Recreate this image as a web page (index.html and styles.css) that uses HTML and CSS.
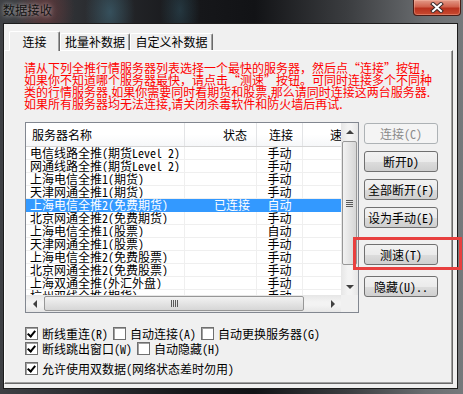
FILE: index.html
```html
<!DOCTYPE html>
<html lang="zh-CN">
<head>
  <meta charset="UTF-8">
  <meta name="viewport" content="width=device-width, initial-scale=1.0">
  <title>数据接收</title>
  <link rel="stylesheet" href="styles.css">
</head>
<body>
  <div class="window">
    <div class="titlebar">
      <span class="title">数据接收</span>
      <div class="close">
        <svg width="14" height="11" viewBox="0 0 14 11">
          <path d="M3 2 L11 9 M11 2 L3 9" stroke="#3a2a2a" stroke-width="4" stroke-linecap="square"/>
          <path d="M3 2 L11 9 M11 2 L3 9" stroke="#fff" stroke-width="2" stroke-linecap="square"/>
        </svg>
      </div>
    </div>

    <div class="client">
      <div class="tabs">
        <div class="tab active">连接</div>
        <div class="tab">批量补数据</div>
        <div class="tab">自定义补数据</div>
      </div>

      <div class="panel">
        <p class="notice">
          <span>请从下列全推行情服务器列表选择一个最快的服务器，然后点“连接”按钮，</span>
          <span>如果你不知道哪个服务器最快，请点击“测速”按钮。可同时连接多个不同种</span>
          <span>类的行情服务器,如果你需要同时看期货和股票,那么请同时连接这两台服务器.</span>
          <span>如果所有服务器均无法连接,请关闭杀毒软件和防火墙后再试.</span>
        </p>

        <div class="middle">
          <div class="listbox">
            <div class="list-content">
              <div class="row header">
                <div class="cell name">服务器名称</div>
                <div class="cell status">状态</div>
                <div class="cell mode">连接</div>
                <div class="cell speed">速度</div>
              </div>
              <div class="row"><div class="cell name">电信线路全推(期货Level 2)</div><div class="cell status"></div><div class="cell mode">手动</div><div class="cell speed"></div></div>
              <div class="row"><div class="cell name">网通线路全推(期货Level 2)</div><div class="cell status"></div><div class="cell mode">手动</div><div class="cell speed"></div></div>
              <div class="row"><div class="cell name">上海电信全推1(期货)</div><div class="cell status"></div><div class="cell mode">手动</div><div class="cell speed"></div></div>
              <div class="row"><div class="cell name">天津网通全推1(期货)</div><div class="cell status"></div><div class="cell mode">手动</div><div class="cell speed"></div></div>
              <div class="row selected"><div class="cell name">上海电信全推2(免费期货)</div><div class="cell status">已连接</div><div class="cell mode">自动</div><div class="cell speed"></div></div>
              <div class="row"><div class="cell name">北京网通全推2(免费期货)</div><div class="cell status"></div><div class="cell mode">手动</div><div class="cell speed"></div></div>
              <div class="row"><div class="cell name">上海电信全推1(股票)</div><div class="cell status"></div><div class="cell mode">自动</div><div class="cell speed"></div></div>
              <div class="row"><div class="cell name">天津网通全推1(股票)</div><div class="cell status"></div><div class="cell mode">手动</div><div class="cell speed"></div></div>
              <div class="row"><div class="cell name">上海电信全推2(免费股票)</div><div class="cell status"></div><div class="cell mode">手动</div><div class="cell speed"></div></div>
              <div class="row"><div class="cell name">北京网通全推2(免费股票)</div><div class="cell status"></div><div class="cell mode">手动</div><div class="cell speed"></div></div>
              <div class="row"><div class="cell name">上海双通全推(外汇外盘)</div><div class="cell status"></div><div class="cell mode">手动</div><div class="cell speed"></div></div>
              <div class="row"><div class="cell name">杭州双线全推(期货)</div><div class="cell status"></div><div class="cell mode">手动</div><div class="cell speed"></div></div>
            </div>

            <div class="vscroll">
              <div class="arrow"><span class="tri up"></span></div>
              <div class="track">
                <div class="thumb"><span class="grip"></span></div>
              </div>
              <div class="arrow"><span class="tri down"></span></div>
            </div>

            <div class="hscroll">
              <div class="arrow"><span class="tri left"></span></div>
              <div class="track">
                <div class="thumb"><span class="grip"></span></div>
              </div>
              <div class="arrow"><span class="tri right"></span></div>
            </div>
            <div class="corner"></div>
          </div>

          <div class="buttons">
            <div class="btn disabled">连接(C)</div>
            <div class="btn">断开D)</div>
            <div class="btn">全部断开(F)</div>
            <div class="btn">设为手动(E)</div>
            <div class="btn btn-speed">测速(T)</div>
            <div class="btn btn-hide">隐藏(U)..</div>
          </div>
        </div>

        <div class="options">
          <div class="opt-row first">
            <label class="opt"><span class="box checked"></span>断线重连(R)</label>
            <label class="opt"><span class="box"></span>自动连接(A)</label>
            <label class="opt"><span class="box"></span>自动更换服务器(G)</label>
          </div>
          <div class="opt-row second">
            <label class="opt"><span class="box checked"></span>断线跳出窗口(W)</label>
            <label class="opt"><span class="box"></span>自动隐藏(H)</label>
          </div>
          <div class="opt-row third">
            <label class="opt"><span class="box checked"></span>允许使用双数据(网络状态差时勿用)</label>
          </div>
        </div>
      </div>
    </div>

    <div class="highlight"></div>
  </div>
</body>
</html>
```

FILE: styles.css
```css
body {
  margin: 0;
  padding: 0;
  font-family: "Noto Sans CJK SC", "Liberation Sans", sans-serif;
  font-size: 12px;
  font-feature-settings: "hwid" 1;
  color: #000;
  background: #fff;
}

.window {
  position: relative;
  width: 463px;
  height: 394px;
  display: flex;
  flex-direction: column;
  background:
    radial-gradient(ellipse 30px 40px at 45px 10px, rgba(150, 60, 60, 0.45), transparent),
    radial-gradient(ellipse 25px 40px at 110px 12px, rgba(70, 120, 140, 0.5), transparent),
    radial-gradient(ellipse 20px 40px at 180px 10px, rgba(60, 110, 130, 0.35), transparent),
    linear-gradient(90deg, #3e4044 0%, #2a2c30 20%, #17181b 40%, #121316 55%, #3b3d40 75%, #6a6d70 92%, #76797c 100%);
}

/* title bar */
.titlebar {
  height: 23px;
  display: flex;
  justify-content: space-between;
  align-items: flex-start;
}

.title {
  padding: 3px 0 0 3px;
  line-height: 13px;
  letter-spacing: 0.3px;
  color: #111;
  text-shadow: 0 0 4px rgba(255, 255, 255, 0.55), 0 0 8px rgba(255, 255, 255, 0.35);
}

.close {
  width: 46px;
  height: 15px;
  margin-right: 2px;
  display: flex;
  justify-content: center;
  align-items: center;
  border: 1px solid #4a1c16;
  border-top: none;
  border-radius: 0 0 4px 4px;
  background: linear-gradient(#e39a88 0%, #d0614c 45%, #b8321e 55%, #c94a30 100%);
  box-shadow: inset 0 0 0 1px rgba(255, 200, 180, 0.35);
}

/* client area */
.client {
  flex: 1;
  margin: 0 5px 5px 3px;
  border: 1px solid #1c1c1c;
  background: #f0f0f0;
  display: flex;
  flex-direction: column;
}

.tabs {
  display: flex;
  align-items: flex-end;
  height: 19px;
  padding: 7px 0 0 5px;
  position: relative;
  z-index: 1;
}

.tab {
  height: 17px;
  line-height: 16px;
  box-sizing: border-box;
  white-space: nowrap;
  border-top: 1px solid #fff;
  border-left: 1px solid #fff;
  border-right: 1px solid #696969;
  box-shadow: inset -1px 0 0 #a0a0a0;
  border-radius: 2px 2px 0 0;
  background: #f0f0f0;
  text-align: center;
}

.tab.active {
  width: 51px;
  height: 20px;
  margin-bottom: -1px;
  line-height: 18px;
  padding-top: 1px;
}

.tab:nth-child(2) { width: 70px; }
.tab:nth-child(3) { width: 83px; }

.panel {
  flex: 1;
  margin: 0 4px 4px 0;
  border-top: 1px solid #fff;
  border-left: 1px solid #fff;
  border-right: 1px solid #696969;
  border-bottom: 1px solid #696969;
  box-shadow: inset -1px -1px 0 #a0a0a0;
  padding: 11px 0 0 19px;
}

.notice {
  margin: 0;
  color: #f00;
  line-height: 12px;
  font-feature-settings: normal;
}

.notice span {
  display: block;
  white-space: nowrap;
}

.middle {
  display: flex;
  margin-top: 12px;
  margin-left: 1px;
}

/* server list */
.listbox {
  width: 334px;
  height: 191px;
  box-sizing: border-box;
  border: 1px solid #828790;
  background: #fff;
  display: grid;
  grid-template-columns: 1fr 17px;
  grid-template-rows: 1fr 17px;
}

.list-content {
  overflow: hidden;
}

.row {
  display: flex;
  height: 13px;
  line-height: 12px;
  box-sizing: border-box;
  border-bottom: 1px solid #efefef;
  white-space: nowrap;
}

.row .cell {
  box-sizing: border-box;
  border-right: 1px solid #efefef;
  overflow: hidden;
}

.cell.name { width: 159px; padding-left: 4px; }
.cell.status { width: 72px; text-align: right; padding-right: 6px; }
.cell.mode { width: 46px; text-align: center; }
.cell.speed { flex: 1; border-right: none; }

.row.header {
  height: 24px;
  line-height: 23px;
  border-bottom: 1px solid #d5d5d5;
  background: linear-gradient(#fff 0%, #fff 50%, #f6f7f9 100%);
}

.row.header .cell { border-right: 1px solid #e3e4e6; }
.row.header .name { padding-left: 6px; }
.row.header .status { padding-right: 9px; }
.row.header .mode { padding-left: 3px; }
.row.header .speed { padding-left: 27px; border-right: none; }

.row.selected {
  background: #3399ff;
  color: #fff;
  border-bottom-color: #3399ff;
}

.row.selected .cell { border-right-color: #3399ff; }

/* scrollbars */
.vscroll, .hscroll {
  display: flex;
  background: linear-gradient(90deg, #e6e6e6, #f3f3f3 40%, #f3f3f3 60%, #e6e6e6);
}

.vscroll { flex-direction: column; }

.hscroll {
  background: linear-gradient(#e6e6e6, #f3f3f3 40%, #f3f3f3 60%, #e6e6e6);
}

.arrow {
  width: 17px;
  height: 17px;
  display: flex;
  justify-content: center;
  align-items: center;
  flex-shrink: 0;
}

.tri {
  width: 0;
  height: 0;
  border: 4px solid transparent;
}

.tri.up { border-bottom: 4px solid #404040; border-top: none; }
.tri.down { border-top: 4px solid #404040; border-bottom: none; }
.tri.left { border-right: 4px solid #404040; border-left: none; }
.tri.right { border-left: 4px solid #404040; border-right: none; }

.track {
  flex: 1;
  display: flex;
}

.vscroll .track { flex-direction: column; padding-top: 1px; }
.hscroll .track { padding-left: 1px; }

.thumb {
  box-sizing: border-box;
  border: 1px solid #979797;
  border-radius: 2px;
  display: flex;
  justify-content: center;
  align-items: center;
}

.vscroll .thumb {
  height: 124px;
  margin: 0 1px;
  background: linear-gradient(90deg, #f2f2f2, #e4e4e4 50%, #d6d6d6);
}

.hscroll .thumb {
  width: 260px;
  margin: 1px 0;
  background: linear-gradient(#f2f2f2, #e4e4e4 50%, #d6d6d6);
}

.grip {
  display: block;
}

.vscroll .grip {
  width: 7px;
  height: 7px;
  background: repeating-linear-gradient(#5a5a5a 0 1px, transparent 1px 2px);
}

.hscroll .grip {
  width: 7px;
  height: 7px;
  background: repeating-linear-gradient(90deg, #5a5a5a 0 1px, transparent 1px 2px);
}

.corner {
  background: #f0f0f0;
}

/* buttons */
.buttons {
  display: flex;
  flex-direction: column;
  gap: 7px;
  margin-left: 5px;
  padding-top: 1px;
}

.btn {
  width: 74px;
  height: 21px;
  box-sizing: border-box;
  border: 1px solid #707070;
  border-radius: 3px;
  background: linear-gradient(#f2f2f2 0%, #ebebeb 50%, #dddddd 51%, #cfcfcf 100%);
  line-height: 19px;
  text-align: center;
  white-space: nowrap;
}

.btn.disabled {
  color: #8a8a8a;
  border-color: #adb2b5;
  background: #f4f4f4;
}

.btn-speed { margin-top: 9px; }
.btn-hide { margin-top: 4px; }

/* options */
.options {
  display: flex;
  flex-direction: column;
  margin-left: 1px;
}

.opt-row {
  display: flex;
  height: 13px;
  align-items: center;
  gap: 5px;
}

.opt-row.first { margin-top: 14px; }
.opt-row.second { margin-top: 2px; }
.opt-row.third { margin-top: 7px; }

.opt {
  display: flex;
  align-items: center;
  white-space: nowrap;
  line-height: 13px;
}

.box {
  width: 13px;
  height: 13px;
  box-sizing: border-box;
  border: 1px solid #6f6f6f;
  box-shadow: inset 1px 1px 0 #a0a0a0;
  background: #fff;
  margin-right: 4px;
  position: relative;
}

.box.checked::after {
  content: "";
  position: absolute;
  left: 3px;
  top: 1px;
  width: 3px;
  height: 6px;
  border-right: 2px solid #000;
  border-bottom: 2px solid #000;
  transform: rotate(40deg);
}

/* annotation overlay */
.highlight {
  position: absolute;
  left: 353px;
  top: 237px;
  width: 109px;
  height: 33px;
  box-sizing: border-box;
  border: 3px solid #e8403f;
}
```
